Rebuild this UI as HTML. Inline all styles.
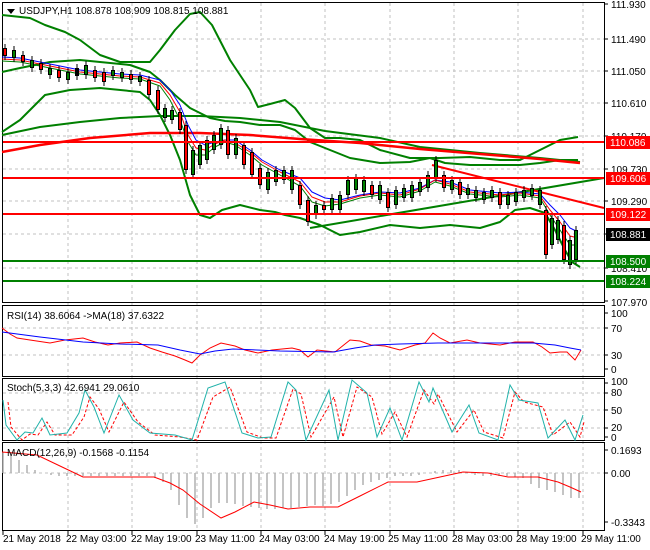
<!DOCTYPE html>
<html><head><meta charset="utf-8"><style>
body{margin:0;background:#fff;width:650px;height:550px;overflow:hidden}
svg{display:block}
text{font-family:"Liberation Sans",sans-serif;font-size:10px;fill:#000}
</style></head><body>
<svg width="650" height="550" viewBox="0 0 650 550" xmlns="http://www.w3.org/2000/svg">
<rect width="650" height="550" fill="#fff"/>
<!-- grid -->
<g stroke="#c0c0c0" stroke-dasharray="3,3" stroke-width="1">
<path d="M68 3V530M132 3V530M197 3V530M261 3V530M325 3V530M390 3V530M454 3V530M518 3V530M583 3V530"/>
<path d="M3 39H604M3 71H604M3 103H604M3 136H604M3 169H604M3 201H604M3 234H604M3 268H604"/>
<path d="M3 328H604M3 355H604M3 393H604M3 410H604M3 428H604M3 473H604"/>
</g>
<!-- panel borders -->
<g fill="none" stroke="#000" stroke-width="1">
<rect x="2.5" y="2.5" width="602" height="300"/>
<rect x="2.5" y="305.5" width="602" height="71"/>
<rect x="2.5" y="378.5" width="602" height="62"/>
<rect x="2.5" y="442.5" width="602" height="88"/>
</g>
<g stroke="#000"><path d="M604 4h4M604 39h4M604 71h4M604 103h4M604 136h4M604 169h4M604 201h4M604 234h4M604 268h4M604 301h4M604 313h4M604 328h4M604 355h4M604 369h4M604 383h4M604 393h4M604 410h4M604 428h4M604 437h4M604 450h4M604 473h4M604 522h4M3 530v5M68 530v5M132 530v5M197 530v5M261 530v5M325 530v5M390 530v5M454 530v5M518 530v5M583 530v5"/></g>
<!-- main chart lines -->
<g fill="none" stroke-linejoin="round">
<polyline stroke="#008000" stroke-width="2" points="2,15 30,18 45,25 65,32 80,40 100,55 120,62 150,62 160,50 175,30 190,14 200,12 212,25 230,60 250,90 258,107 270,104 285,100 295,108 310,128 325,138 340,138 360,140 380,150 410,158 440,158 470,157 500,160 520,160 540,150 560,140 578,137"/>
<polyline stroke="#008000" stroke-width="2" points="2,72 20,68 50,62 80,60 100,62 130,65 150,72 160,80 175,95 190,108 210,118 225,121 240,122 260,125 280,125 295,130 310,142 330,150 350,158 380,163 410,162 430,158 445,163 470,165 500,165 520,165 540,163 560,160 578,160"/>
<polyline stroke="#008000" stroke-width="2" points="2,132 20,120 45,95 70,90 100,88 140,92 150,100 160,115 170,135 180,160 190,195 200,215 210,218 222,210 240,205 260,210 275,212 285,215 300,218 320,225 340,235 360,232 390,225 420,228 450,225 480,228 500,222 515,210 530,208 545,213 555,230 565,250 572,262 580,267"/>
<polyline stroke="#008000" stroke-width="2" points="2,135 40,127 80,122 120,118 160,116 200,116 240,118 280,122 325,131 380,138 420,147 480,153 540,158 580,162"/>
<polyline stroke="#ff0000" stroke-width="2.5" points="2,152 40,145 90,138 150,133 200,133 250,135 300,139 360,143 420,149 480,154 540,159 580,163"/>
<line x1="310" y1="228" x2="604" y2="178" stroke="#008000" stroke-width="2"/>
<line x1="432" y1="165" x2="604" y2="208" stroke="#ff0000" stroke-width="2"/>
<!-- MAs -->
<polyline stroke="#0000ff" stroke-width="1" points="2,57 20,58 40,62 60,66 80,70 100,72 120,74 140,75 160,80 170,90 180,105 188,125 196,140 205,145 215,142 225,140 235,140 250,150 262,160 280,170 300,178 312,192 325,198 340,200 360,195 380,192 400,193 420,188 435,180 450,182 470,190 500,193 520,192 540,194 550,205 560,215 570,228 578,232"/>
<polyline stroke="#ff0000" stroke-width="1" points="2,59 20,60 40,64 60,68 80,72 100,74 120,76 140,77 160,83 170,95 180,112 188,135 196,148 205,150 215,144 225,140 235,143 250,152 262,162 280,172 300,182 312,197 325,202 340,202 360,196 380,193 400,195 420,189 435,180 450,184 470,192 500,195 520,193 540,196 550,210 560,222 570,236 578,238"/>
<polyline stroke="#008000" stroke-width="1" points="2,61 20,62 40,66 60,70 80,74 100,76 120,78 140,79 160,86 170,100 180,120 188,142 196,155 205,155 215,147 225,142 235,145 250,155 262,165 280,175 300,186 312,202 325,206 340,204 360,198 380,195 400,197 420,191 435,182 450,186 470,194 500,197 520,195 540,198 550,215 560,230 570,245 578,245"/>
</g>
<!-- candles -->
<g stroke="#000" fill="none">
<path stroke-width="1" d="M5 44V60M14 46V62M23 51V66M32 56V72M41 59V74M50 64V79M59 66V82M68 68V84M77 64V80M86 61V79M95 66V82M104 68V86M113 66V80M122 68V82M131 70V84M140 72V86M149 76V99M158 86V114M165 104V122M172 106V124M180 108V134M186 121V174M193 146V179M200 141V169M207 136V164M214 131V154M221 124V149M228 126V159M236 134V159M244 141V169M252 148V179M260 164V189M268 168V194M276 166V186M284 166V184M292 166V194M300 181V209M308 196V226M316 201V219M324 201V214M332 194V214M340 191V214M348 176V199M356 174V194M364 176V196M372 181V199M380 181V204M388 188V212M396 186V209M404 184V202M412 181V202M420 178V196M428 171V192M436 156V182M444 171V192M452 176V194M460 178V199M468 184V199M476 186V202M484 188V204M492 186V202M500 188V209M508 191V209M516 188V206M524 186V202M532 184V200M540 186V209M546 206V259M552 214V249M558 216V244M564 221V264M570 236V269M576 226V264"/>
<path stroke-width="4" d="M5 48V56M14 50V58M23 55V62M32 60V68M41 63V70M50 68V75M59 70V78M68 72V80M77 68V76M86 65V75M95 70V78M104 72V82M113 70V76M122 72V78M131 74V80M140 76V82M149 80V95M158 90V110M165 108V118M172 110V120M180 112V130M186 125V170M193 150V175M200 145V165M207 140V160M214 135V150M221 128V145M228 130V155M236 138V155M244 145V165M252 152V175M260 168V185M268 172V190M276 170V182M284 170V180M292 170V190M300 185V205M308 200V222M316 205V215M324 205V210M332 198V210M340 195V210M348 180V195M356 178V190M364 180V192M372 185V195M380 185V200M388 192V208M396 190V205M404 188V198M412 185V198M420 182V192M428 175V188M436 160V178M444 175V188M452 180V190M460 182V195M468 188V195M476 190V198M484 192V200M492 190V198M500 192V205M508 195V205M516 192V202M524 190V198M532 188V196M540 190V205M546 210V255M552 218V245M558 220V240M564 225V260M570 240V265M576 230V260"/>
</g>
<g stroke="#ff0000" stroke-width="2" fill="none"><path d="M5 49V55M23 56V61M41 64V69M59 71V77M95 71V77M104 73V81M131 75V79M149 81V94M158 91V109M180 113V129M186 126V169M228 131V154M244 146V164M252 153V174M260 169V184M300 186V204M308 201V221M324 206V209M372 186V194M388 193V207M444 176V187M460 183V194M500 193V204M546 211V254M564 226V259"/></g>
<g stroke="#008000" stroke-width="2" fill="none"><path d="M14 51V57M32 61V67M50 69V74M68 73V79M86 66V74M113 71V75M122 73V77M140 77V81M165 109V117M172 111V119M193 151V174M200 146V164M207 141V159M214 136V149M221 129V144M236 139V154M268 173V189M276 171V181M284 171V179M292 171V189M316 206V214M332 199V209M340 196V209M348 181V194M356 179V189M364 181V191M380 186V199M396 191V204M404 189V197M412 186V197M420 183V191M428 176V187M436 161V177M452 181V189M468 189V194M476 191V197M484 193V199M492 191V197M508 196V204M516 193V201M524 191V197M532 189V195M540 191V204M552 219V244M558 221V239M570 241V264M576 231V259"/></g>
<!-- horizontal levels -->
<g stroke-width="2"><path stroke="#ff0000" d="M3 142H604M3 178H604M3 214H604"/><path stroke="#008000" d="M3 261H604M3 281H604"/></g>
<!-- title -->
<path d="M7 9h8l-4 5z" fill="#000"/>
<text x="19" y="14">USDJPY,H1  108.878 108.909 108.815 108.881</text>
<!-- price axis -->
<g font-size="10">
<text x="611" y="8">111.930</text><text x="611" y="43">111.490</text><text x="611" y="75">111.050</text><text x="611" y="107">110.610</text><text x="611" y="140">110.170</text><text x="611" y="173">109.730</text><text x="611" y="205">109.290</text><text x="611" y="272">108.410</text><text x="611" y="306">107.970</text>
</g>
<rect x="606" y="136" width="44" height="13" fill="#ff0000"/><text x="610" y="146" style="fill:#fff">110.086</text>
<rect x="606" y="172" width="44" height="13" fill="#ff0000"/><text x="610" y="182" style="fill:#fff">109.606</text>
<rect x="606" y="208" width="44" height="13" fill="#ff0000"/><text x="610" y="218" style="fill:#fff">109.122</text>
<rect x="606" y="228" width="44" height="13" fill="#000"/><text x="610" y="238" style="fill:#fff">108.881</text>
<rect x="606" y="255" width="44" height="13" fill="#008000"/><text x="610" y="265" style="fill:#fff">108.500</text>
<rect x="606" y="275" width="44" height="13" fill="#008000"/><text x="610" y="285" style="fill:#fff">108.224</text>
<!-- RSI -->
<g fill="none" stroke-width="1">
<polyline stroke="#ff0000" points="2,328 10,334 17,338 30,340 50,343 65,340 83,338 95,342 108,345 120,343 137,342 150,348 162,352 175,356 185,360 192,363 200,355 210,348 221,343 235,346 245,350 258,353 272,350 292,348 300,350 308,357 317,350 335,352 350,340 360,341 371,345 385,346 400,350 415,345 425,343 433,333 440,338 450,343 467,340 480,343 500,345 515,342 533,342 542,347 550,353 560,352 567,352 575,360 581,350"/>
<polyline stroke="#0000ff" points="2,332 40,337 83,342 120,344 158,345 180,350 200,354 215,351 233,349 280,351 333,352 355,348 375,345 400,344 438,343 480,343 533,343 555,345 570,348 581,350"/>
</g>
<text x="7" y="319">RSI(14) 38.6064  -&gt;MA(18) 37.6322</text>
<g font-size="9"><text x="611" y="317">100</text><text x="611" y="332">70</text><text x="611" y="359">30</text><text x="611" y="373">0</text></g>
<!-- Stoch -->
<g fill="none" stroke-width="1">
<polyline stroke="#ff0000" stroke-dasharray="3,2" transform="translate(5,2)" points="3,400 6,425 17,438 25,432 33,433 42,420 50,433 67,433 79,415 85,395 94,407 104,430 119,400 133,420 150,433 175,435 192,438 208,395 225,385 242,430 258,436 271,436 288,387 296,392 306,435 329,395 338,435 352,385 367,395 377,432 390,410 402,435 419,388 429,402 433,392 452,430 469,408 479,430 498,436 510,390 519,400 538,405 548,433 565,420 575,435 579,420"/>
<polyline stroke="#20b2aa" points="3,400 6,425 17,440 25,432 33,433 42,418 50,435 67,433 79,413 85,390 94,407 104,433 119,395 133,420 150,433 175,435 192,440 208,388 225,382 242,433 258,438 271,437 288,382 296,390 306,440 329,390 338,440 352,380 367,393 377,437 390,408 402,440 419,382 429,402 433,388 452,432 469,405 479,433 498,440 510,385 519,400 538,403 548,438 565,420 575,440 583,415"/>
</g>
<text x="7" y="391">Stoch(5,3,3) 42.6941 29.0610</text>
<g font-size="9"><text x="611" y="385">100</text><text x="611" y="396">80</text><text x="611" y="414">50</text><text x="611" y="431">20</text><text x="611" y="441">0</text></g>
<!-- MACD -->
<path stroke="#b0b0b0" stroke-width="1.5" fill="none" d="M3 473V452M11 473V455M19 473V460M27 473V465M35 473V470M51 473V475M59 473V476M67 473V476M75 473V476M83 473V476M91 473V476M99 473V476M107 473V476M115 473V476M123 473V476M131 473V476M139 473V476M147 473V476M155 473V478M163 473V482M171 473V490M179 473V505M187 473V518M195 473V524M203 473V518M211 473V508M219 473V503M227 473V503M235 473V504M243 473V506M251 473V507M259 473V508M267 473V509M275 473V509M283 473V508M291 473V508M299 473V507M307 473V506M315 473V505M323 473V506M331 473V504M339 473V502M347 473V496M355 473V490M363 473V485M371 473V482M379 473V480M387 473V478M395 473V476M403 473V476M411 473V476M419 473V475M435 473V471M443 473V470M451 473V470M459 473V470M467 473V472M475 473V475M483 473V476M491 473V476M499 473V476M507 473V476M515 473V477M523 473V478M531 473V484M539 473V488M547 473V490M555 473V492M563 473V495M571 473V498M579 473V498"/>
<polyline fill="none" stroke="#ff0000" stroke-width="1" points="2,452 37,455 60,466 83,477 154,477 170,483 183,490 200,504 221,518 235,512 254,502 270,505 288,509 310,507 338,507 360,496 388,482 417,482 440,477 463,472 488,473 508,477 538,477 558,482 570,487 581,492"/>
<text x="7" y="456">MACD(12,26,9) -0.1568 -0.1154</text>
<g font-size="9"><text x="611" y="454">0.1693</text><text x="611" y="477">0.00</text><text x="611" y="526">-0.3343</text></g>
<!-- dates -->
<g font-size="10">
<text x="3" y="542">21 May 2018</text><text x="66" y="542">22 May 03:00</text><text x="131" y="542">22 May 19:00</text><text x="195" y="542">23 May 11:00</text><text x="259" y="542">24 May 03:00</text><text x="324" y="542">24 May 19:00</text><text x="388" y="542">25 May 11:00</text><text x="452" y="542">28 May 03:00</text><text x="516" y="542">28 May 19:00</text><text x="581" y="542">29 May 11:00</text>
</g>
</svg>
</body></html>
